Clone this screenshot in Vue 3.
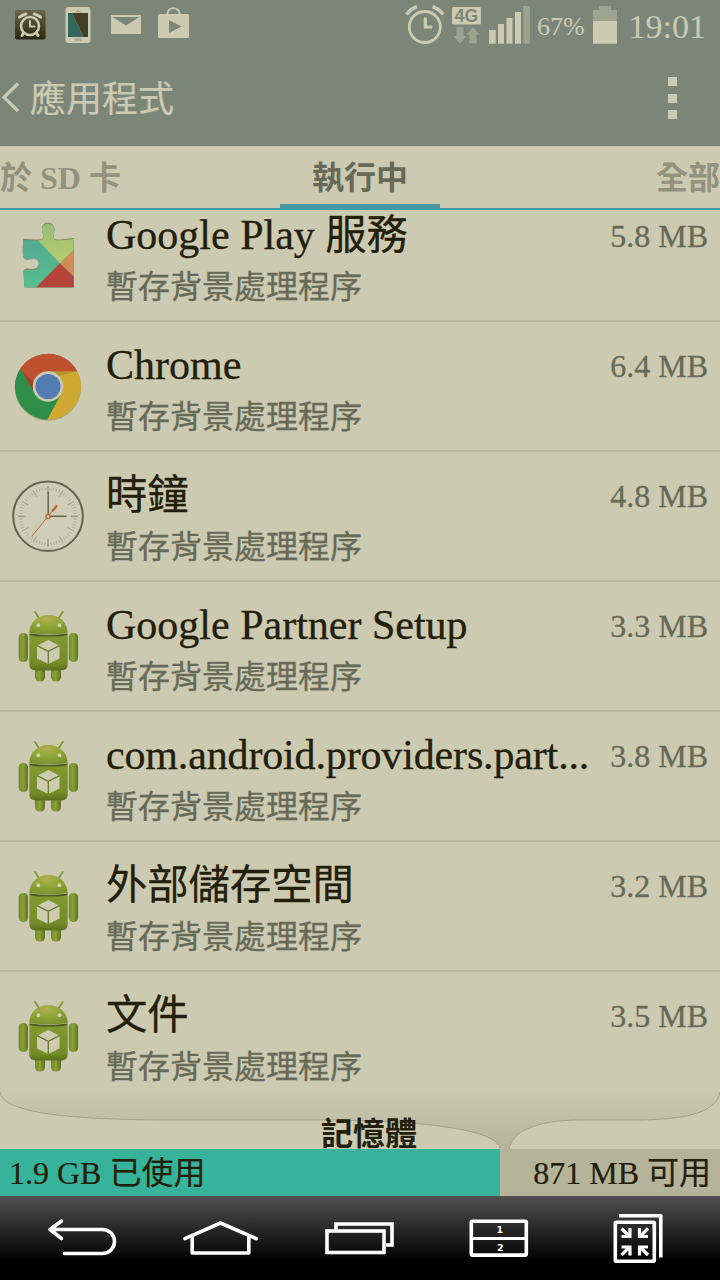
<script setup>
const rows = [
  { icon: 'play', name: 'Google Play ', cjk: '服務', size: '5.8 MB' },
  { icon: 'chrome', name: 'Chrome', size: '6.4 MB' },
  { icon: 'clock', cjk: '時鐘', size: '4.8 MB' },
  { icon: 'android', name: 'Google Partner Setup', size: '3.3 MB' },
  { icon: 'android', name: 'com.android.providers.part...', size: '3.8 MB', tight: true },
  { icon: 'android', cjk: '外部儲存空間', size: '3.2 MB' },
  { icon: 'android', cjk: '文件', size: '3.5 MB' },
]
const ticks = Array.from({ length: 60 }, (_, i) => i)
const piece =
  'M23.300 47.700Q33 49 40.500 48.200C45.500 47 42.500 42 42 38 41.500 29.500 54.500 29.500 54.300 38 54 42 52 47 56 48.200Q64 48.600 73.700 47V95.300H24.300L23.500 80C25 75 31 79 35 77.500 40 75.500 40 68 35 66.500 30.500 65.500 27 69.500 23.300 65.500 22.300 62 23 52 23.300 47.700z'
</script>

<template>
  <div class="screen">
    <header class="top">
      <div class="status">
        <svg class="status-left" width="200" height="50" viewBox="0 0 200 50">
          <defs>
            <linearGradient id="alarmBox" x1="0" y1="0" x2="0" y2="1">
              <stop offset="0" stop-color="#6b674c" />
              <stop offset="1" stop-color="#2a260e" />
            </linearGradient>
          </defs>
          <rect x="15" y="10" width="30.500" height="29.500" rx="2" fill="url(#alarmBox)" />
          <g fill="none" stroke="#cdcab2" stroke-linecap="round">
            <circle cx="30" cy="26" r="9" stroke-width="2.600" />
            <path d="M30 21v5.500h4.500" stroke-width="2" />
            <path d="M19.500 17.200Q22 15 25.800 14M40.500 17.200Q38 15 34.200 14" stroke-width="3" />
            <path d="M23.500 33l-1.500 2.500M36.500 33l1.500 2.500" stroke-width="3" />
          </g>
          <rect x="65.500" y="7" width="25" height="36" rx="3" fill="#cdcab2" />
          <path d="M68 13h4l11.500 24H68z" fill="#32665b" />
          <path d="M72 13h16v24h-4.500z" fill="#423d23" />
          <path d="M75.500 11.500h5M78 9.500v1" stroke="#99967f" stroke-width="1.200" />
          <rect x="74.500" y="38" width="7" height="3" fill="#b0ad96" />
          <rect x="111" y="15" width="30" height="19" fill="#cdcab2" />
          <path d="M112.500 17h27L126 25.500z" fill="#7b8679" />
          <rect x="158" y="14" width="31" height="24" rx="1.500" fill="#cdcab2" />
          <path d="M167.500 15v-1.500a6 5.300 0 0 1 12 0V15" fill="none" stroke="#cdcab2" stroke-width="1.800" />
          <path d="M169 20v13l12.500-6.500z" fill="#7b8679" />
        </svg>
        <div class="status-right">
          <svg width="126" height="50" viewBox="404 0 126 50">
            <g fill="none" stroke="#cdcab2">
              <circle cx="424.800" cy="27" r="15.500" stroke-width="2.800" />
              <path d="M425.300 17.500v9.500h7" stroke-width="3.200" />
              <path d="M406.500 14.500Q411 8.500 417 6.800M443.300 14.500Q438.500 8.500 432.500 6.800" stroke-width="3.600" />
            </g>
            <rect x="452" y="7" width="29" height="17.500" rx="1.500" fill="#cdcab2" />
            <text x="466.500" y="21.800" class="g4" text-anchor="middle">4G</text>
            <path d="M456.500 27h7v9h3L460 43.500 453.500 36h3z" fill="#9da38f" />
            <path d="M469.500 43.500h7v-9h3L473 27 466.500 34.500h3z" fill="#9da38f" />
            <g fill="#cdcab2">
              <rect x="489" y="30" width="6.700" height="13.700" />
              <rect x="498" y="24" width="6" height="19.700" />
              <rect x="506.500" y="18" width="6" height="25.700" />
              <rect x="515" y="12" width="6" height="31.700" />
            </g>
            <rect x="523.300" y="6" width="6.500" height="37.700" fill="#9da38f" />
          </svg>
          <span class="pct">67%</span>
          <svg width="24" height="50" viewBox="593 0 24 50">
            <path d="M593 10h6V6h12v4h6v11h-24z" fill="#9da38f" />
            <rect x="593" y="21" width="24" height="22.700" fill="#cdcab2" />
          </svg>
          <span class="time">19:01</span>
        </div>
      </div>
      <div class="title-bar">
        <svg width="30" height="40" viewBox="0 79 30 40">
          <path d="M18 84.500L4 98.300 18 112" fill="none" stroke="#cdcab2" stroke-width="3.200" />
        </svg>
        <h1>應用程式</h1>
        <div class="dots"><i></i><i></i><i></i></div>
      </div>
    </header>

    <nav class="tabs">
      <span>於 SD 卡</span>
      <span class="active">執行中</span>
      <span class="last">全部</span>
    </nav>

    <main class="list">
      <div v-for="(r, i) in rows" :key="i" class="row">
        <svg v-if="r.icon === 'play'" class="icon" width="96" height="130" viewBox="0 0 96 130">
          <defs>
            <clipPath id="piece"><path :d="piece" /></clipPath>
            <linearGradient id="teal" x1="0" y1="0" x2="0" y2="1">
              <stop offset="0" stop-color="#50a093" /><stop offset="1" stop-color="#57c08f" />
            </linearGradient>
            <linearGradient id="lime" x1="0" y1="0" x2="0" y2="1">
              <stop offset="0" stop-color="#96bc78" /><stop offset="1" stop-color="#b8cc6c" />
            </linearGradient>
          </defs>
          <path :d="piece" transform="translate(0 -0.9)" fill="#7b6c50" opacity=".8" />
          <path :d="piece" transform="translate(0.3 0.7)" fill="#7b6c50" opacity=".5" />
          <g clip-path="url(#piece)">
            <rect x="20" y="28" width="56" height="70" fill="url(#teal)" />
            <path d="M32 28h44v27.500L60 71.300 37.500 48z" fill="url(#lime)" />
            <path d="M76 55.700V86.500L60 71.300z" fill="#d18b55" />
            <path d="M35 96.300L60 71.300 76 87v11z" fill="#b4433a" />
          </g>
        </svg>

        <svg v-else-if="r.icon === 'chrome'" class="icon" width="96" height="130" viewBox="0 0 96 130">
          <circle cx="48" cy="65.400" r="33.300" fill="#8d8a70" opacity=".6" />
          <circle cx="48" cy="64.500" r="32.600" fill="#2f8f48" />
          <path d="M77.300 49.300A33.200 33.200 0 0 1 47 97.700L60.500 73 48 49.300z" fill="#cfa931" />
          <path d="M48 49.300h29.300L59 54z" fill="#b8922b" />
          <path d="M20.300 46.500A33.200 33.200 0 0 1 77.300 49.300H48L34.500 71z" fill="#bd5130" />
          <path d="M20.300 46.500A33.200 33.200 0 0 0 47 97.700L60.500 73 48 64.500 34 71.500z" fill="#2f8f48" />
          <path d="M21 47.500L33.500 69V60z" fill="#9f4428" />
          <circle cx="48" cy="64.500" r="15.200" fill="#cdcab2" />
          <circle cx="48" cy="64.500" r="12.600" fill="#527db0" />
        </svg>

        <svg v-else-if="r.icon === 'clock'" class="icon" width="96" height="130" viewBox="0 0 96 130">
          <circle cx="48" cy="64.300" r="34.800" fill="#d0cdb6" stroke="#64654f" stroke-width="2" />
          <g stroke="#98967f">
            <path
              v-for="t in ticks"
              :key="t"
              :d="t % 5 ? 'M48 35.300v3' : 'M48 34.300v7.500'"
              :stroke-width="t % 15 ? 0.8 : 1.6"
              :opacity="t % 5 ? 0.65 : 0.85"
              :transform="`rotate(${t * 6} 48 64.3)`"
            />
          </g>
          <path d="M48.200 39.700V64.300H66.500" fill="none" stroke="#64654f" stroke-width="1.500" />
          <path d="M31.700 84.500L48 64.300 53 58.300" fill="none" stroke="#c0652b" stroke-width="1" />
          <path d="M52.500 59L56.500 54" stroke="#c0652b" stroke-width="2.200" stroke-linecap="round" />
          <circle cx="48" cy="64.500" r="2.100" fill="#d0cdb6" stroke="#c0652b" stroke-width="1.300" />
        </svg>

        <svg v-else class="icon" width="96" height="130" viewBox="0 0 96 130">
          <defs>
            <linearGradient :id="'limb' + i" x1="0" y1="0" x2="1" y2="0">
              <stop offset="0" stop-color="#71882b" />
              <stop offset=".45" stop-color="#8ba236" />
              <stop offset="1" stop-color="#5d7023" />
            </linearGradient>
            <linearGradient :id="'body' + i" x1="0" y1="0" x2="0" y2="1">
              <stop offset="0" stop-color="#82992f" />
              <stop offset=".8" stop-color="#748b28" />
              <stop offset="1" stop-color="#596d1e" />
            </linearGradient>
            <radialGradient :id="'head' + i" cx=".45" cy=".2" r=".8">
              <stop offset="0" stop-color="#b3ae4f" />
              <stop offset=".45" stop-color="#8fa838" />
              <stop offset="1" stop-color="#7a922d" />
            </radialGradient>
          </defs>
          <path d="M35 30l4.500 7M62.700 30l-4.500 7" stroke="#7d952f" stroke-width="1.700" stroke-linecap="round" />
          <rect x="35" y="80" width="10" height="19.500" rx="4.500" :fill="`url(#limb${i})`" />
          <rect x="51" y="80" width="10" height="19.500" rx="4.500" :fill="`url(#limb${i})`" />
          <rect x="18.700" y="51" width="9.300" height="29" rx="4.300" :fill="`url(#limb${i})`" />
          <rect x="68.800" y="51" width="9.300" height="29" rx="4.300" :fill="`url(#limb${i})`" />
          <path d="M29.300 53.800h38.400V82q0 6.500-6.500 6.500H35.800q-6.500 0-6.500-6.500z" :fill="`url(#body${i})`" />
          <path d="M29.500 52.500q19 2.400 38 0" fill="none" stroke="#4d5b1d" stroke-width="1.800" />
          <path d="M29.300 51.300C29.500 40 38 33 48.500 33s19 7 19.200 18.300q-19 2-38.400 0z" :fill="`url(#head${i})`" />
          <circle cx="38.300" cy="43.200" r="1.900" fill="#d4d0b4" />
          <circle cx="59.500" cy="43.200" r="1.900" fill="#d4d0b4" />
          <path d="M48.300 58L59.500 63.700V76.500L48.300 82 37 76.500V63.700z" fill="#ceccb0" />
          <path d="M37 63.700L48.300 69.300 59.500 63.700M48.300 69.300V82" fill="none" stroke="#65792a" stroke-width="1.300" />
        </svg>

        <div class="text">
          <div class="line">
            <span class="name" :class="{ tight: r.tight }">{{ r.name }}<span v-if="r.cjk" class="cjk">{{ r.cjk }}</span></span>
            <span class="size">{{ r.size }}</span>
          </div>
          <div class="sub">暫存背景處理程序</div>
        </div>
      </div>
    </main>

    <section class="memory">
      <svg class="curves" width="720" height="59" viewBox="0 1090 720 59">
        <defs>
          <linearGradient id="shade" x1="0" y1="0" x2="0" y2="1">
            <stop offset="0" stop-color="#cdcab2" />
            <stop offset="1" stop-color="#b6b39b" />
          </linearGradient>
        </defs>
        <rect x="0" y="1090" width="720" height="59" fill="url(#shade)" />
        <path d="M0 1092C3 1112 60 1119 160 1120H330C440 1121 500 1132 500.500 1150H0z" fill="#cdcab2" />
        <path d="M509 1150C511 1132 535 1120 580 1120H640C690 1119 716 1112 720 1092V1150z" fill="#cdcab2" />
        <g fill="none" stroke="#a09d86" stroke-width=".9">
          <path d="M0 1092C3 1112 60 1119 160 1120H330C440 1121 500 1132 500.500 1150" />
          <path d="M509 1150C511 1132 535 1120 580 1120H640C690 1119 716 1112 720 1092" />
        </g>
      </svg>
      <h2>記憶體</h2>
    </section>
    <div class="usage">
      <div class="used">1.9 GB 已使用</div>
      <div class="free">871 MB 可用</div>
    </div>

    <footer class="keys">
      <svg viewBox="12 1196 139 84">
        <path d="M61.500 1221L50 1229.500 61.500 1238.500M50.500 1229.500H102.500A11.900 11.900 0 0 1 102.500 1253.500H64.500" stroke-linecap="round" stroke-linejoin="round" />
      </svg>
      <svg viewBox="151 1196 139 84">
        <path d="M185 1238.700L220.500 1223 256.300 1238.700" stroke-linecap="round" />
        <path d="M192.200 1236V1253H248.800V1236" stroke-linejoin="round" />
      </svg>
      <svg viewBox="290 1196 139 84">
        <path d="M336 1231V1224H392V1245H386" />
        <rect x="327" y="1231" width="57" height="21.500" />
      </svg>
      <svg viewBox="429 1196 139 84">
        <rect x="471.300" y="1221.300" width="55" height="33.800" rx="1" />
        <path d="M471 1238.500H527" stroke-width="3" />
        <text x="499.700" y="1233" text-anchor="middle">1</text>
        <text x="500.200" y="1251" text-anchor="middle">2</text>
      </svg>
      <svg viewBox="568 1196 139 84">
        <rect x="615.300" y="1222.300" width="39" height="39" rx="1" />
        <path d="M619 1215.800H660.800V1257.500" stroke-linejoin="round" />
        <g stroke-width="3.200">
          <path d="M621.500 1228.500L629 1236M630 1228V1236.500H621.500" />
          <path d="M648 1228.500L640.500 1236M639.500 1228V1236.500H648" />
          <path d="M621.500 1255L629 1247.500M630 1255.500V1247H621.500" />
          <path d="M648 1255L640.500 1247.500M639.500 1255.500V1247H648" />
        </g>
      </svg>
    </footer>
  </div>
</template>

<style>
body {
  margin: 0;
  background: #cdcab2;
}
</style>

<style scoped>
.screen {
  width: 720px;
  height: 1280px;
  overflow: hidden;
  display: flex;
  flex-direction: column;
  background: #cdcab2;
  color: #22200b;
  font-family: "Liberation Serif", "Noto Sans CJK TC", serif;
}
svg {
  display: block;
  flex: none;
}
.top {
  height: 146px;
  flex: none;
  background: #7b8679;
  box-sizing: border-box;
  border-bottom: 1px solid #7b7e6e;
  color: #cdcab2;
}
.status {
  height: 50px;
  display: flex;
  justify-content: space-between;
}
.status-right {
  display: flex;
  padding-right: 14px;
}
.g4 {
  font: bold 17.5px "Liberation Sans", sans-serif;
  fill: #7b8679;
}
.pct {
  width: 63px;
  box-sizing: border-box;
  padding-left: 7px;
  font-size: 26px;
  line-height: 54px;
}
.time {
  width: 89px;
  box-sizing: border-box;
  text-align: right;
  font-size: 34px;
  line-height: 54px;
}
.title-bar {
  height: 96px;
  display: flex;
  align-items: center;
}
h1 {
  flex: 1;
  margin: 0;
  padding-top: 4px;
  font-size: 36px;
  font-weight: 400;
  line-height: 92px;
  -webkit-text-stroke: 0.2px;
}
.dots {
  width: 9px;
  margin-right: 43px;
  display: grid;
  gap: 7.5px;
}
.dots i {
  height: 9px;
  background: #cdcab2;
}
.tabs {
  height: 64px;
  flex: none;
  box-sizing: border-box;
  border-bottom: 2px solid #4599a5;
  display: grid;
  grid-template-columns: 280px 160px 280px;
  font-size: 32px;
  font-weight: 700;
  line-height: 64px;
  color: #93927e;
}
.tabs span {
  height: 58px;
}
.tabs .active {
  text-align: center;
  color: #666a57;
  border-bottom: 4px solid #4599a5;
}
.tabs .last {
  text-align: right;
}
.list {
  height: 880px;
  flex: none;
  overflow: hidden;
}
.row {
  height: 130px;
  box-sizing: border-box;
  display: flex;
  border-bottom: 2px solid #bcb9a2;
}
.row:first-child {
  margin-top: -18px;
}
.icon {
  margin-bottom: -2px;
}
.text {
  flex: 1;
  min-width: 0;
  padding: 18px 12px 0 10px;
  -webkit-text-stroke: 0.3px;
}
.line {
  display: flex;
  justify-content: space-between;
  white-space: nowrap;
}
.name {
  font-size: 42px;
  line-height: 51px;
  height: 50px;
  white-space: pre;
}
.cjk {
  font-size: 41.3px;
}
.tight {
  letter-spacing: -0.15px;
}
.size {
  font-size: 32px;
  line-height: 53px;
  height: 50px;
  color: #666a57;
}
.sub {
  margin-top: 7px;
  font-size: 32px;
  line-height: 40px;
  color: #666a57;
}
.memory {
  position: relative;
  height: 59px;
  flex: none;
}
h2 {
  position: absolute;
  left: 321px;
  top: 28px;
  margin: 0;
  font-size: 32px;
  line-height: 32px;
  font-weight: 700;
  white-space: nowrap;
}
.usage {
  height: 47px;
  flex: none;
  display: flex;
  font-size: 32px;
  line-height: 49px;
  -webkit-text-stroke: 0.2px;
}
.used {
  width: 500px;
  box-sizing: border-box;
  padding-left: 9px;
  background: #38b39b;
}
.free {
  flex: 1;
  padding-right: 9px;
  text-align: right;
  background: #b6b39b;
}
.keys {
  height: 84px;
  flex: none;
  display: flex;
  padding: 0 12px;
  background: linear-gradient(#505050, #2c2c2c 35%, #000 78%);
}
.keys svg {
  width: 139px;
  height: 84px;
  fill: none;
  stroke: #fff;
  stroke-width: 3.6;
}
.keys text {
  fill: #fff;
  stroke: none;
  font: bold 9.5px "DejaVu Sans", sans-serif;
}
</style>
